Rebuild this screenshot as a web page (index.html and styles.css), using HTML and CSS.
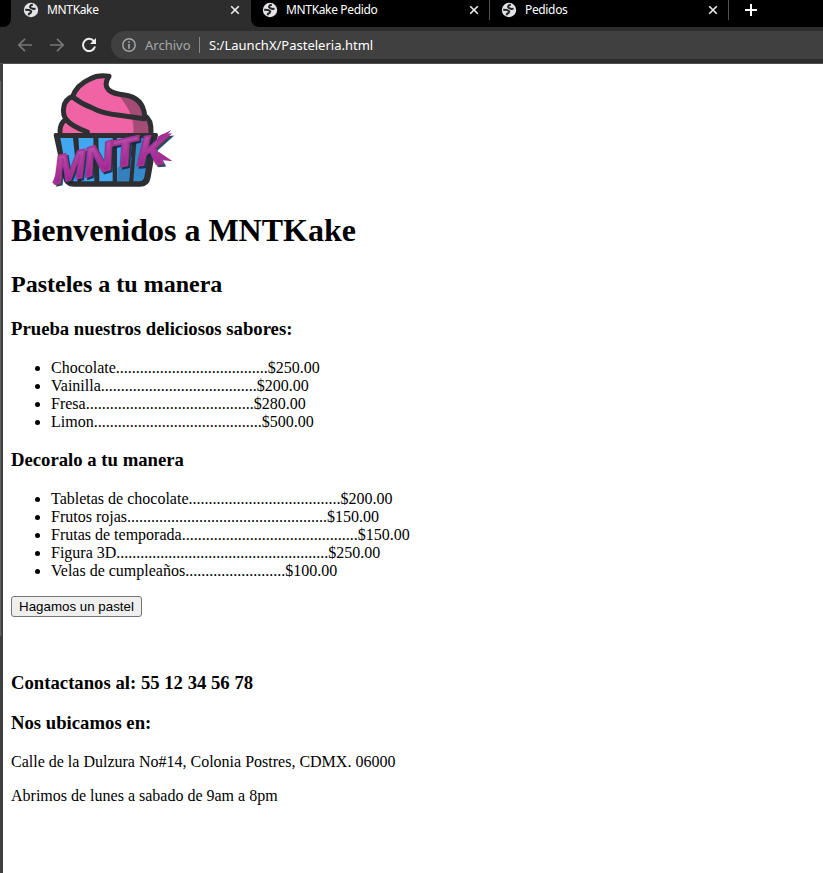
FILE: index.html
```
<!DOCTYPE html>
<html lang="es">
<head>
<meta charset="utf-8">
<title>MNTKake</title>
<link rel="stylesheet" href="styles.css">
</head>
<body>
<svg class="defs" width="0" height="0" aria-hidden="true">
  <symbol id="globe" viewBox="0 0 16 16">
    <circle cx="8" cy="8" r="7.2" fill="#e2e4e7"/>
    <path d="M9.8 2.8 7.9 3.2 6.9 4.8 8.1 6.2 10.6 7 12.6 6.6M2.2 7.8 6.2 8 8.3 9.4 7.6 11 6 11.6 5.6 13.2" fill="none" class="globe-land"/>
  </symbol>
  <symbol id="close" viewBox="0 0 10 10"><path d="M1.2 1.2 8.8 8.8M8.8 1.2 1.2 8.8" fill="none" stroke="#eee" stroke-width="1.6"/></symbol>
</svg>
<header class="browser">
  <nav class="tabs">
    <div class="tab active"><svg class="fav"><use href="#globe"/></svg><span>MNTKake</span><svg class="close"><use href="#close"/></svg></div>
    <div class="tab second"><svg class="fav"><use href="#globe"/></svg><span>MNTKake Pedido</span><svg class="close"><use href="#close"/></svg></div>
    <div class="tab third"><svg class="fav"><use href="#globe"/></svg><span>Pedidos</span><svg class="close"><use href="#close"/></svg></div>
    <svg class="plus" viewBox="0 0 12 12"><path d="M6 0V12M0 6H12" stroke="#fff" stroke-width="2"/></svg>
  </nav>
  <div class="toolbar">
    <svg class="nav" viewBox="0 0 16 16"><path d="M15 8H2M8 1.8 1.8 8 8 14.2" fill="none" stroke="#777" stroke-width="1.7"/></svg>
    <svg class="nav" viewBox="0 0 16 16"><path d="M1 8H14M8 1.8 14.2 8 8 14.2" fill="none" stroke="#777" stroke-width="1.7"/></svg>
    <svg class="nav" viewBox="0 0 16 16"><path d="M13.2 4.6A6.1 6.1 0 1 0 14 9.5" fill="none" stroke="#eee" stroke-width="2"/><path d="M15 1V7H9Z" fill="#eee"/></svg>
    <div class="address">
      <svg class="info" viewBox="0 0 14 14"><circle cx="7" cy="7" r="6.2" fill="none" stroke="#a5a8ab" stroke-width="1.4"/><path d="M7 3.2V4.8M7 6.1V10.7" stroke="#a5a8ab" stroke-width="1.6"/></svg>
      <span class="scheme">Archivo</span><i class="bar"></i><span class="url">S:/LaunchX/Pasteleria.html</span>
    </div>
  </div>
</header>
<div class="window">
  <aside class="edge"></aside>
  <main>
    <svg class="logo" viewBox="0 0 450 366" role="img" aria-label="MNTK">
      <defs>
        <linearGradient id="brush" x1="0" y1="0" x2="0" y2="1"><stop offset=".2" stop-color="#b64da5"/><stop offset="1" stop-color="#9b168c"/></linearGradient>
      </defs>
      <path d="M56 205Q57 177 78 162Q68 149 71 128Q74 103 98 94Q110 60 150 42Q174 29 207 34Q193 55 206 75Q220 85 254 90Q309 98 314 152Q335 163 334 205Z" fill="#f064a5"/>
      <path d="M236 91Q309 93 313 154L334 177V205H280Q286 150 236 91Z" fill="#a54c76"/>
      <g fill="none" stroke="#2e2f32" stroke-width="15" stroke-linecap="round" stroke-linejoin="round">
        <path d="M60 201Q59 175 78 163Q68 149 71 128Q74 103 98 94Q110 60 150 42Q174 29 207 34Q190 59 206 75Q220 87 254 90Q309 98 314 152Q335 163 333 203"/>
        <path d="M98 96Q123 116 155 128Q187 146 238 151L312 161M78 163Q94 183 142 201"/>
      </g>
      <path d="M47 210H348L326 337Q322 359 300 359H101Q79 359 75 337Z" fill="#2e2f32" stroke="#2e2f32" stroke-width="12" stroke-linejoin="round"/>
      <path d="M61 219H99L113 349H94Q84 347 82 335ZM115 219H160L163 349H124ZM175 219H218V349H178ZM231 219H276L267 349H231Z" fill="#42a6f1"/>
      <path d="M290 219H334L313 335Q310 348 299 349H280Z" fill="#358acb"/>
      <path d="M232 310 275 275 267 349H232Z" fill="#3580bc"/>
      <g class="brush-shadow">
        <text transform="translate(49 362) rotate(-13) skewX(-10) scale(1 1)" font-size="116">M</text>
        <text transform="translate(142 343) rotate(-18) skewX(-10) scale(1.08 1)" font-size="118">N</text>
        <text transform="translate(225 316) rotate(-12) skewX(-3) scale(1.15 1)" font-size="116">T</text>
        <text transform="translate(296 309) rotate(-5) skewX(-8) scale(.98 1)" font-size="124">K</text>
      </g>
      <g class="brush-letters">
        <text transform="translate(43 356) rotate(-13) skewX(-10) scale(1 1)" font-size="116">M</text>
        <text transform="translate(136 337) rotate(-18) skewX(-10) scale(1.08 1)" font-size="118">N</text>
        <text transform="translate(219 310) rotate(-12) skewX(-3) scale(1.15 1)" font-size="116">T</text>
        <text transform="translate(290 302) rotate(-5) skewX(-8) scale(.98 1)" font-size="124">K</text>
      </g>
      <path d="M37 353 56 305 50 362ZM355 214 395 195 378 212 394 208 350 235ZM356 260 398 289 355 284Z" fill="#a13194"/>
    </svg>
    <h1>Bienvenidos a MNTKake</h1>
    <h2>Pasteles a tu manera</h2>
    <h3>Prueba nuestros deliciosos sabores:</h3>
    <ul>
      <li>Chocolate......................................$250.00</li>
      <li>Vainilla.......................................$200.00</li>
      <li>Fresa..........................................$280.00</li>
      <li>Limon..........................................$500.00</li>
    </ul>
    <h3>Decoralo a tu manera</h3>
    <ul>
      <li>Tabletas de chocolate......................................$200.00</li>
      <li>Frutos rojas..................................................$150.00</li>
      <li>Frutas de temporada............................................$150.00</li>
      <li>Figura 3D.....................................................$250.00</li>
      <li>Velas de cumpleaños.........................$100.00</li>
    </ul>
    <button>Hagamos un pastel</button>
    <h3 class="contact">Contactanos al: 55 12 34 56 78</h3>
    <h3>Nos ubicamos en:</h3>
    <p>Calle de la Dulzura No#14, Colonia Postres, CDMX. 06000</p>
    <p>Abrimos de lunes a sabado de 9am a 8pm</p>
  </main>
</div>
</body>
</html>
```
FILE: styles.css
```
* { box-sizing: border-box; }
body { margin: 0; height: 873px; overflow: hidden; display: flex; flex-direction: column; background: #fff; color: #000; font-family: "Liberation Serif", serif; font-size: 16px; line-height: 18px; }
svg { display: block; flex: none; }
.defs { position: absolute; }
.browser { height: 64px; flex: none; background: #2d2d2d; border-bottom: 1px solid #505050; font-family: "Noto Sans", sans-serif; color: #fff; }
.tabs { height: 27px; display: flex; background: linear-gradient(90deg, #2d2d2d 0 260px, #000 260px); }
.tabs::before { content: ""; width: 11px; background: #000; border-radius: 0 0 8px 0; }
.tab { height: 27px; padding: 0 11px 7px 12px; display: flex; align-items: center; font-size: 12px; letter-spacing: -.35px; white-space: nowrap; }
.tab span { flex: 1; margin-left: 8px; }
.active { width: 240px; background: #2d2d2d; }
.second { width: 239px; background: #000; border-radius: 0 0 0 8px; }
.third { width: 239px; }
.second, .third { padding-left: 11px; background-image: linear-gradient(#505050, #505050); background-size: 1px 20px; background-position: right 0; background-repeat: no-repeat; }
.fav { width: 16px; height: 16px; }
.globe-land { stroke: #252525; stroke-width: 1.9; stroke-linejoin: round; }
.close { width: 10px; height: 10px; }
.plus { width: 12px; height: 12px; margin: 4px 0 0 16px; }
.toolbar { height: 36px; display: flex; align-items: center; padding-left: 17px; }
.nav { width: 16px; height: 16px; margin-right: 16px; }
.address { flex: 1; height: 28px; margin-left: -2px; padding-left: 11px; display: flex; align-items: center; background: #404040; border-radius: 14px 0 0 14px; font-size: 13px; }
.info { width: 14px; height: 14px; }
.scheme { width: 47px; margin-left: 9px; color: #a5a8ab; }
.bar { width: 1px; height: 16px; margin: 0 9px 0 7px; background: #85878a; }
.window { flex: 1; display: flex; }
.edge { width: 3px; background: linear-gradient(#636363, #636363) 0 17px / 1px 555px no-repeat, #404040; }
main { padding: 1px 8px 0; }
.logo { width: 150px; height: 122px; margin: 0 0 25px 29px; overflow: visible; }
.brush-letters, .brush-shadow { font-family: "Liberation Sans", sans-serif; font-weight: 700; font-style: italic; stroke-width: 5; }
.brush-letters { fill: url(#brush); stroke: #a83399; }
.brush-shadow { fill: #15273b; stroke: #15273b; opacity: .85; }
h1, h2, h3 { font-weight: 700; }
h1 { font-size: 32px; line-height: 37px; margin: 21px 0 22px; }
h2 { font-size: 24px; line-height: 27px; margin: 20px 0; }
h3 { font-size: 18.72px; line-height: 21px; margin: 18px 0 20px; }
ul { margin: 20px 0 18px; padding-left: 40px; }
button { display: block; width: 131px; height: 21px; margin: -2px 0 0; padding: 0; border: 1px solid #767676; border-radius: 3px; background: #efefef; color: #000; font: 13.333px/17px "Liberation Sans", sans-serif; }
.contact { margin: 55px 0 19px; }
p { margin: 16px 0; }
```
